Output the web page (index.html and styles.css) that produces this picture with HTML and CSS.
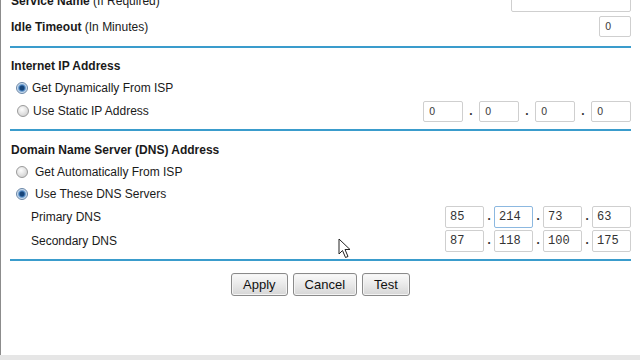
FILE: index.html
```html
<html>

<head>
  <meta name="viewport" content="width=device-width, initial-scale=1.0">
  <link rel="stylesheet" href="styles.css">
</head>

<body>
  <div class="page">
    <div class="row">
      <span><b>Service Name</b> (If Required)</span>
      <input class="field wide">
    </div>
    <div class="row">
      <span><b>Idle Timeout</b> (In Minutes)</span>
      <input class="field small" value="0">
    </div>
    <hr>

    <h4>Internet IP Address</h4>
    <label class="opt"><input type="radio" name="ip" class="radio" checked>Get Dynamically From ISP</label>
    <div class="row tall">
      <label class="opt"><input type="radio" name="ip" class="radio">Use Static IP Address</label>
      <div class="ip">
        <input class="field oct" value="0"><i>.</i>
        <input class="field oct" value="0"><i>.</i>
        <input class="field oct" value="0"><i>.</i>
        <input class="field oct" value="0">
      </div>
    </div>
    <hr>

    <h4 class="dns-title">Domain Name Server (DNS) Address</h4>
    <label class="opt dns"><input type="radio" name="dns" class="radio">Get Automatically From ISP</label>
    <label class="opt dns"><input type="radio" name="dns" class="radio" checked>Use These DNS Servers</label>
    <div class="row tall sub">
      <span>Primary DNS</span>
      <div class="ip mono">
        <input class="field" value="85"><i>.</i>
        <input class="field focus" value="214"><i>.</i>
        <input class="field" value="73"><i>.</i>
        <input class="field" value="63">
      </div>
    </div>
    <div class="row tall sub">
      <span>Secondary DNS</span>
      <div class="ip mono">
        <input class="field" value="87"><i>.</i>
        <input class="field" value="118"><i>.</i>
        <input class="field" value="100"><i>.</i>
        <input class="field" value="175">
      </div>
    </div>
    <hr>

    <div class="buttons">
      <button>Apply</button>
      <button>Cancel</button>
      <button>Test</button>
    </div>

    <svg class="cursor" width="14" height="22" viewBox="0 0 14 22">
      <path d="M1 1 L1 16 L4.5 12.5 L7.5 19.5 L10 18.5 L7 11.5 L12 11.5 Z" fill="#fff" stroke="#222" stroke-width="1" stroke-linejoin="round" />
    </svg>
  </div>
  <div class="foot"></div>
</body>

</html>
```

FILE: styles.css
```css
html,
body {
  margin: 0;
  padding: 0;
  background: #fff;
  overflow: hidden;
}

body * {
  box-sizing: border-box;
  font-family: "Liberation Sans", Arial, sans-serif;
  font-size: 12px;
  color: #1a1a1a;
}

.page {
  position: relative;
  margin-top: -12px;
  min-height: 367px;
  border-left: 1px solid #8c8c8c;
  padding: 0 9px 0 9px;
}

.row {
  display: flex;
  align-items: center;
  justify-content: space-between;
  height: 26px;
  padding-left: 1px;
}

.row.tall {
  height: 24px;
}

.row.sub {
  padding-left: 21px;
}

b {
  font-weight: bold;
}

hr {
  border: none;
  height: 2px;
  background: #3a9ccc;
  margin: 6px 0 0;
}

h4 {
  margin: 7px 0 0;
  height: 22px;
  line-height: 22px;
  padding-left: 1px;
  font-weight: bold;
}

h4.dns-title {
  margin-top: 8px;
}

.opt {
  display: flex;
  align-items: center;
  gap: 4px;
  height: 22px;
  padding-left: 6px;
}

.opt.dns {
  gap: 7px;
}

.row.tall .opt {
  height: 24px;
}

.radio {
  appearance: none;
  -webkit-appearance: none;
  margin: 0;
  width: 12px;
  height: 12px;
  border-radius: 50%;
  border: 1px solid #9a9a9a;
  background: radial-gradient(circle at 40% 35%, #fdfdfd, #d2d2d2 80%);
}

.radio:checked {
  border-color: #6a87a8;
  background: radial-gradient(circle, #17457a 0 2px, #4d86c2 3px, #c9dcef 4.5px, #e6e6e6 6px);
}

.field {
  height: 22px;
  border: 1px solid #cfcfcf;
  border-radius: 2px;
  background: #fff;
  padding: 0 5px;
  outline: none;
  font-family: "DejaVu Sans", Verdana, sans-serif;
  font-size: 10px;
  color: #444;
}

.wide {
  width: 120px;
}

.small {
  width: 32px;
  height: 21px;
  margin-top: -1px;
}

.ip {
  display: flex;
  align-items: center;
}

.ip .field {
  width: 40px;
  height: 21px;
}

.ip i {
  font-style: normal;
  width: 16px;
  text-align: center;
  font-weight: bold;
  color: #333;
}

.ip.mono .field {
  width: 39px;
  height: 22px;
  padding: 0 4px;
  font-family: "Liberation Mono", "Courier New", monospace;
  font-size: 12px;
  color: #333;
}

.ip.mono i {
  width: 10px;
  font-family: "Liberation Mono", monospace;
  font-weight: bold;
}

.ip .field.focus {
  border-color: #8cb8e0;
}

.buttons {
  display: flex;
  justify-content: center;
  gap: 5px;
  margin-top: 12px;
}

button {
  height: 23px;
  padding: 0 11px;
  border: 1px solid #8a8a8a;
  border-radius: 3px;
  background: linear-gradient(#fafafa, #e9e9e9 50%, #d6d6d6);
  font-size: 13px;
  color: #111;
  box-shadow: inset 0 0 0 1px #f4f4f4;
}

.cursor {
  position: absolute;
  left: 337px;
  top: 250px;
}

.foot {
  height: 10px;
  background: #e6e6e6;
}
```
